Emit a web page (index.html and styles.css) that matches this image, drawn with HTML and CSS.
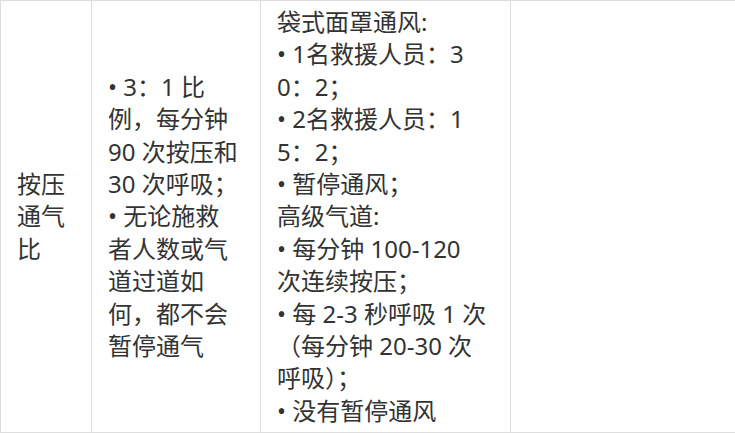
FILE: index.html
```html
<!DOCTYPE html>
<html lang="zh-CN">
<head>
<meta charset="utf-8">
<title>按压通气比</title>
<link rel="stylesheet" href="styles.css">
</head>
<body>
<table class="cpr-table">
  <colgroup>
    <col class="c-label">
    <col class="c-old">
    <col class="c-new">
    <col class="c-empty">
  </colgroup>
  <tbody>
    <tr>
      <td class="cell cell-label">按压通气比</td>
      <td class="cell cell-old">
        <div class="item">• 3：1 比例，每分钟 90 次按压和 30 次呼吸；</div>
        <div class="item">• 无论施救者人数或气道过道如何，都不会暂停通气</div>
      </td>
      <td class="cell cell-new">
        <div class="item">袋式面罩通风:</div>
        <div class="item">• 1名救援人员：30：2；</div>
        <div class="item">• 2名救援人员：15：2；</div>
        <div class="item">• 暂停通风；</div>
        <div class="item">高级气道:</div>
        <div class="item">• 每分钟 100-120 次连续按压；</div>
        <div class="item">• 每 2-3 秒呼吸 1 次（每分钟 20-30 次呼吸）；</div>
        <div class="item">• 没有暂停通风</div>
      </td>
      <td class="cell cell-empty"></td>
    </tr>
  </tbody>
</table>
</body>
</html>
```
FILE: styles.css
```css
html, body {
  margin: 0;
  padding: 0;
  background: #ffffff;
}

.cpr-table {
  border-collapse: collapse;
  table-layout: fixed;
  width: 735px;
  height: 433px;
  font-family: "Noto Sans", "Noto Sans CJK SC", sans-serif;
  font-size: 24px;
  line-height: 32.4px;
  color: #333333;
}

.c-label { width: 91px; }
.c-old { width: 169px; }
.c-new { width: 250px; }
.c-empty { width: 225px; }

.cell {
  border: 1px solid #dddddd;
  padding: 5px 16px;
  vertical-align: middle;
  word-break: break-all;
  text-align: left;
}

.cell-old {
  padding-right: 20px;
}

.cell-new {
  padding-right: 22px;
}
```
